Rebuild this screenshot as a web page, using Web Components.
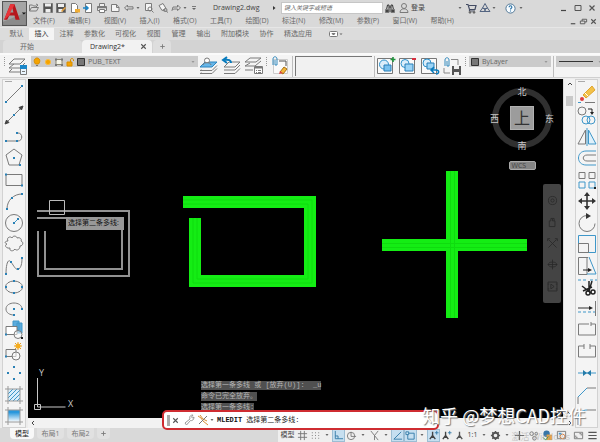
<!DOCTYPE html>
<html lang="zh-CN">
<head>
<meta charset="utf-8">
<title>Drawing2.dwg</title>
<style>
  html, body { height: 100%; margin: 0; }
  body { font: 7px/10px "Open Sans", "Noto Sans CJK SC", sans-serif; color: #686868; background: #d9d9d9; overflow: hidden; }
</style>
</head>
<body>
<cad-app></cad-app>

<script>
/* Icon drawings: [view box size, markup, grip points] */
const ICONS = {
  logo: [24, '<rect width="24" height="24" fill="#555" stroke="none"/><rect x="1" y="1" width="22" height="22" fill="#8b8b8b" stroke="none"/><path d="M1 1h22v10L1 20z" fill="#a5a5a5" stroke="none"/><path d="M2 18 8 3h4l5 15h-4l-1-4H7l-2 4z" fill="#b5161d" stroke="none"/><path d="M8 3h4l-2 5-3 6-5 4z" fill="#e8343a" stroke="none"/><path d="m8 11 2-4 1 4z" fill="#999" stroke="none"/><path d="M19 11h4l-2 2z" fill="#111" stroke="none"/>'],
  open: [12, '<path d="M1.500 9V3h3l1 1h3v1.500M1.500 9l2-3.500h7L8.500 9zM8 2l2 1-1 1" />'],
  save: [12, '<path d="M1.500 1.500h9v9h-9z" fill="#555"/><path d="M3 1.500h6v3H3zM3.500 7h5v3.500h-5z" fill="#eee" stroke="none"/>'],
  saveas: [12, '<path d="M1.500 1.500h9v9h-9z" fill="#555"/><path d="M3 2h6v3H3zM3.500 7h4v3h-4z" fill="#eee" stroke="none"/><path d="m6 9 4-4 1 1-4 4z" fill="#e9a13b" stroke="none"/>'],
  phoneopen: [12, '<path d="M2.500 1.500h4l2 2v7h-6z" fill="#fff"/><path d="M6 7h5v3.500H6z" fill="#f0ad33" stroke="none"/>'],
  phonesave: [12, '<path d="M3.500 1.500h6v9h-6z" fill="#fff"/><path d="M1 6h5M4 4l2 2-2 2" stroke="#1c86c8" stroke-width="1.500"/>'],
  print: [12, '<path d="M3.500 4V1.500h5V4M1.500 4.500h9v4h-9z" fill="#eee"/><path d="M1.500 5.500h9" stroke-width="1.600"/><path d="M3.500 7.500h5v3h-5z" fill="#fff"/>'],
  plot: [12, '<path d="M2.500 2.500h5l2.500 3v4H2.500z" fill="#f4f4f4"/><path d="M7.500 2.500v3H10"/>'],
  undo: [12, '<path d="M4.500 3 1.500 6l3 2.500V7h5.500V4.800H4.500z"/>'],
  redo: [12, '<path d="m7.500 3 3 3-3 2.500V7h-4L2 8.500 3 5h4.500z"/>'],
  page: [12, '<path d="M2.500 1.500h6v7h-6z" fill="#f4f4f4"/><circle cx="7" cy="7" r="2"/><path d="m8.500 8.500 2 2"/>'],
  page2: [12, '<path d="m2 3.500 4-2 3 5-4 2z" fill="#f4f4f4"/><path d="M6 8.500c2 1 3 0 5 2" /><circle cx="8.500" cy="8" r="1.500"/>'],
  caret: [6, '<path d="M1.500 2h3L3 4z" fill="#666" stroke="none"/>'],
  caretbar: [8, '<path d="M2 2.500h4"/><path d="M2 4h4L4 6z" fill="#666" stroke="none"/>'],
  right: [6, '<path d="M2 1v4l2.500-2z" fill="#333" stroke="none"/>'],
  binoc: [12, '<path d="M2 10 3.500 3h1.500v7zM10 10 8.500 3H7v7zM5 5h2" stroke="#333"/><path d="M1.500 7.500H5v3H1.500zM7 7.500h3.500v3H7z" fill="#444"/>'],
  user: [12, '<circle cx="6" cy="4" r="2.500"/><path d="M2 10.500c0-5 8-5 8 0z"/>'],
  cart: [12, '<path d="M1 2.500h2l1.500 5H10l1-4H4M4.500 7.500V9H10" stroke="#444c63" stroke-width="1.200"/><circle cx="5" cy="10.300" r="1" fill="#444"/><circle cx="9" cy="10.300" r="1" fill="#444"/>'],
  a360: [12, '<path d="M6 1.500 8.500 6 6 7 3.500 6zM3.500 6 1 9.500h5V7zM8.500 6 11 9.500H6V7z" stroke="#536481"/>'],
  help: [12, '<circle cx="6" cy="6" r="5" fill="#f8fcff" stroke="#456f91"/><path d="M4.500 4.500c0-2 3-2 3 0C7.500 6 6 5.500 6 7.200M6 8.200v1" stroke="#246fa5" stroke-width="1.200"/>'],
  min: [10, '<path d="M2 7.500h5" stroke="#444" stroke-width="1.200"/>'],
  max: [10, '<path d="M2 2.500h6v5H2z" stroke="#555"/>'],
  restore: [10, '<path d="M1.500 4.500h5v3h-5zM3.500 4.500v-2h5v3h-2" stroke="#555"/>'],
  close: [10, '<path d="m2.500 2.500 5 5m0-5-5 5" stroke="#555" stroke-width="1.200"/>'],
  plus: [10, '<path d="M5 2.500v5M2.500 5h5"/>'],
  panel: [16, '<rect x="2.500" y="5.500" width="8" height="5" rx="1" fill="#fff"/><path d="M5 7.500h3L6.500 9z" fill="#333"/><path d="M12.500 7.500h3L14 9z" fill="#666" stroke="none"/>'],
  layers: [20, '<path d="M1 8 6 3h11l-5 5zM1 12l5-4M1 12h11l5-5M1 16l3-3M1 16h11l5-5" /><path d="M12.500 9.500h6v9h-6z" fill="#eaf6ff"/><path d="M12 9h7v4h-7z" fill="#1b87c9" stroke="none"/><path d="M14 15.500h3"/>'],
  layblue: [20, '<path d="m1 11 5-5h12l-5 5z" fill="#66b6e9" stroke="#2c84bd"/><path d="m3 14-2 .500h12l5-5M3 17l-2 .500h12l5-5"/><circle cx="8" cy="4.500" r="2.500" fill="#fff"/><path d="M4 9c0-3 8-3 8 0"  fill="#66b6e9"/>'],
  layprev: [20, '<path d="m2 11 5-5h11l-5 5zM2 14h11l5-5M2 17.500h11l5-5"/><path d="M9 7c0-3-2-3.500-7-3M5 1 1 4l4 3" fill="none" stroke="#087bbd" stroke-width="2"/>'],
  layiso: [20, '<path d="m1 6 5-4h11l-5 4zM1 10l5-3M1 10h10l6-5M1 14h8"/><path d="M10.500 10.500h8v7h-8z" fill="#fff"/><path d="M11 11.500h7" stroke-width="2"/><path d="M12 14.500h1m1 0h3m-5 2h1m1 0h3"/>'],
  bulb: [10, '<path d="M3.500 7C1 4 2.500 1 5 1s4 3 1.500 6z" fill="#f5a400" stroke="#d98e00"/><path d="M4 8.500h2" stroke="#777"/>'],
  sun: [10, '<circle cx="5" cy="5" r="2.600" fill="#f5a400" stroke="#f8bd43"/>'],
  vp: [10, '<path d="M2 2.500h6v5H2z" fill="#f4f4e8" stroke="#8a8672"/><path d="M1 1.500h2v2H1zM7 1.500h2v2H7zM1 7h2v2H1zM7 7h2v2H7z" fill="#777" stroke="none"/>'],
  lock: [10, '<path d="M5.500 5V3c0-2 3-2 3 0v1" stroke="#d98e00"/><path d="M2 5h5v4H2z" fill="#f5a400" stroke="#d98e00"/>'],
  swatch: [10, '<path d="M1.500 1.500h7v7h-7z" fill="#777" stroke="#333"/>'],
  match: [20, '<path d="M3.500 3.500h14v14h-14z" stroke="#ccc" fill="#fafafa"/><path d="M3 9V3c0-3 4-3 4 0v6H5V4" stroke="#348abd"/><path d="M9 5h7v5" stroke="#555"/><path d="m10 16 4-5 3 2-4 5z" fill="#f3b83b" stroke="#a87117"/><path d="m9 18 1-3 3 2z" fill="#db4545" stroke="none"/>'],
  gadd: [20, '<path d="M1.500 2.500h15v15h-15z" fill="#fafafa" stroke="#777"/><circle cx="8" cy="8.500" r="4.500" fill="#dceefa" stroke="#2e92cc"/><path d="M8 9h7v6H8z" fill="#78c1ee" stroke="#287fb8"/><path d="M17 1v5m-2.500-2.500h5" stroke="#20923c" stroke-width="1.600"/>'],
  gsub: [20, '<path d="M1.500 2.500h15v15h-15z" fill="#fafafa" stroke="#777"/><circle cx="7" cy="7.500" r="4" fill="#dceefa" stroke="#2e92cc"/><path d="M7 8h8v7H7z" fill="#9bd4f6" stroke="#287fb8"/><path d="M14 3h4" stroke="#d52f3f" stroke-width="2"/>'],
  gundo: [20, '<path d="M1.500 2.500h15v15h-15z" fill="#fafafa" stroke="#777"/><circle cx="7" cy="7" r="4" fill="#dceefa" stroke="#2e92cc"/><path d="M7 7h7v6H7z" fill="#9bd4f6" stroke="#287fb8"/><path d="M12 14h4c4 0 3 4 0 4M14 11l-3 3 3 3" stroke="#087bbd" stroke-width="1.500"/>'],
  gsave: [20, '<path d="M3 10V4c0-3 4-3 4 0v6H5V5" stroke="#348abd"/><path d="M9 3.500h7V9M2 12v5h6" stroke="#888"/><path d="M10 10h9v9h-9z" fill="#555" stroke="none"/><path d="M12 10h5v3h-5zM12 16h5v3h-5z" fill="#eee" stroke="none"/>'],
  line: [20, '<path d="M2 18 18 2"/>', [[2,18],[18,2]]],
  xline: [20, '<path d="M2 18 18 2"/><path d="m1 19 1.500-4L5 17.500zM19 1l-4 1.500L17.500 5z" fill="#444" stroke="#444"/>', [[10,10]]],
  pline: [20, '<path d="M2 14h12c5 0 5-8 0-8"/>', [[2,14],[13,14],[13,6]]],
  polygon: [20, '<path d="m10 1 8 6-3 10H5L2 7z"/>', [[10,10],[16,17]]],
  rect: [20, '<path d="M2 4.500h16v11H2z"/>', [[2,4.5],[18,15.5]]],
  arc: [20, '<path d="M3 18C3 9 10 3 18 3"/>', [[3,18],[8,7],[18,3]]],
  circle: [20, '<circle cx="10" cy="10" r="8.500"/><path d="m10 10 4-4" stroke="#3f97c9"/>', [[10,10],[14,6]]],
  cloud: [20, '<path d="M4 7C2 3 7 2 8 4c1-3 5-2 5 0 3-1 5 1 4 3 3 1 2 5-1 5 0 4-4 5-5 3-2 3-6 2-5-1-4 1-6-3-3-4-3-1-2-3 1-3z"/>'],
  spline: [20, '<path d="M2 18C2 8 4 2 7 6s5 9 8 7c2-2 3-5 3-11"/>', [[2,18],[7,6],[14,13],[18,2]]],
  ellipse: [20, '<ellipse cx="10" cy="10" rx="8.500" ry="6"/>', [[10,4],[10,16],[18,10],[2,10]]],
  earc: [20, '<path d="M18 10C18 2 2 2 2 10c0 4 4 6 8 6"/>', [[18,10],[10,10],[10,16]]],
  insblock: [20, '<path d="M9 1h6v9H9zM13 3h5v10h-5z" fill="#5babdd" stroke="#3f97c9"/><path d="M2 6.500h11v8H2z" fill="#fff"/><circle cx="14" cy="14.500" r="4" fill="#fff8"/><path d="M17 17h2v2h-2z" fill="#222" stroke="none"/>', [[2,14.5]]],
  mkblock: [20, '<path d="M2 7.500h10v7H2z"/><circle cx="12" cy="14" r="4" fill="#fff8"/><path d="M14 0v8m-4-4h8m-7-3 6 6m0-6-6 6" stroke="#e79d20"/><circle cx="14" cy="4" r="2.500" fill="#f6ad1d" stroke="none"/>', [[2,14.5]]],
  points: [20, '', [[10,4],[4,10],[16,10],[10,16]]],
  hatch: [20, '<path d="M4 4h12v12H4z" fill="#d9eefb" stroke="none"/><path d="m4 9 5-5M4 13l9-9M5 16 16 5M9 16l7-7m-3 7 3-3" stroke="#3f97c9"/><path d="M1 4h18M1 16h18M4 1v18M16 1v18" stroke="#999"/>'],
  gradient: [20, '<defs><linearGradient id="g" x2="0" y2="1"><stop offset=".2" stop-color="#2797dc"/><stop offset="1" stop-color="#fff"/></linearGradient></defs><path d="M4 4h12v12H4z" fill="url(#g)" stroke="none"/><path d="M1 4h18M1 16h18M4 1v18M16 1v18" stroke="#999"/>'],
  erase: [20, '<path d="m6 11 9-9 3 4-9 8z" fill="#f3c148" stroke="#dfa52f"/><path d="m8 9 3 3" stroke="#fff"/><circle cx="5" cy="15" r="2" fill="#dd3f3f" stroke="none"/><path d="M1 18.500h3" stroke="#3f97c9"/><path d="M8 18.500h10"/>'],
  copy: [20, '<circle cx="5" cy="6" r="4"/><circle cx="9" cy="15" r="4" stroke="#3f97c9"/><circle cx="14" cy="15" r="4" stroke="#3f97c9"/><path d="M11 4h4v4" stroke="#222"/><path d="M13 7h4l-2 3z" fill="#222" stroke="none"/>'],
  mirror: [20, '<path d="M8.500 3v14H1z"/><path d="M11.500 3v14H19z" fill="#dff0fa" stroke="#3f97c9"/><path d="M10 1v18" stroke="#3f97c9"/>'],
  offset: [20, '<path d="M19 3H9C-1 3-1 17 9 17h10" stroke="#3f97c9"/><path d="M19 7H10c-5 0-5 6 0 6h9"/>'],
  array: [20, '<path d="M2 2.500h6v6H2zM12 2.500h6v6h-6z"/><path d="M2 12h6v6H2zM12 12h6v6h-6z" stroke="#3f97c9"/><path d="M17 17h2v2h-2z" fill="#222" stroke="none"/>'],
  move: [20, '<path d="M10 3v14M3 10h14" stroke="#333" stroke-width="1.600"/><path d="M10 1 7 5h6zM10 19l-3-4h6zM1 10l4-3v6zM19 10l-4-3v6z" fill="#333" stroke="none"/>'],
  rotate: [20, '<path d="M10 2.500a8 8 0 1 0 8 8"/><path d="m9 0 5 3-5 3z" fill="#333" stroke="none"/>'],
  scale: [20, '<path d="M1.500 1.500h17v17h-17z" stroke="#3f97c9"/><path d="M1.500 9.500h10v9h-10z"/>'],
  stretch: [20, '<path d="M11 1.500H1.500v17H10V1"/><path d="m12 1 7 17h-9" stroke="#3f97c9"/><path d="M6 14h6" stroke="#222"/><path d="m11 12 4 2-4 2z" fill="#222" stroke="none"/>'],
  trim: [20, '<path d="M1 3h3m2 0h3m4 0h3m2 0h2" stroke="#3f97c9"/><path d="m5 9 9 7M6 14l9-4M12 4v9M15 4l-3 10" stroke="#222" stroke-width="1.500"/><circle cx="11" cy="16" r="2" stroke="#222" stroke-width="1.500"/><circle cx="16" cy="15" r="2" stroke="#222" stroke-width="1.500"/>'],
  extend: [20, '<path d="M18.500 2v15"/><path d="M1 13h3m2 0h3m2 0h3m2 0h2" stroke="#3f97c9"/><path d="M1 9h11" stroke="#333"/><path d="m12 7 4 2-4 2z" fill="#222" stroke="none"/>'],
  breakpt: [20, '<path d="M14 4h4.500v11h-17V4H12M14 2v4"/>'],
  brk: [20, '<path d="M7 4H1.500v11h17V4H13M7 2v5M13 2v5"/>'],
  join: [20, '<path d="M1 10h18" stroke="#3f97c9"/><path d="m6 7 4 3-4 3zM14 7l-4 3 4 3z" fill="#247ba9" stroke="none"/>'],
  chamfer: [20, '<path d="m1 12 9-9" stroke="#3f97c9"/><path d="M10 3h9M1 12v7"/>'],
  fillet: [20, '<path d="M1 13C1 7 5 4 10 4" stroke="#3f97c9"/><path d="M10 4h9M1 13v6"/>'],
  wrench: [12, '<path d="m2 9 5-4c-1-3 1-4 3-4L8.500 3l1 1L11 3c0 3-2 4-3.500 3.500L3.500 11z" stroke="#999"/>'],
  mledit: [12, '<path d="m1 2 3 2 2 3 5 4M3 1l3 4 4 2" stroke="#d69034"/><path d="m2 10 8-8" stroke="#777"/>'],
  grid: [12, '<path d="M4 1v10M8 1v10M1 4h10M1 8h10" stroke="#777"/>'],
  snap: [12, '<path d="M2 3h1m2.500 0h1M9 3h1M2 6h1m2.500 0h1M9 6h1M2 9h1m2.500 0h1M9 9h1" stroke="#777"/>'],
  ortho: [12, '<path d="M2.500 1v8.500H11M2.500 6.500h3v3" stroke="#357ca8"/>'],
  polar: [12, '<circle cx="5.500" cy="6.500" r="4"/><path d="M5.500 2v5H11"/>'],
  iso: [12, '<path d="m2 1 8 10M6 6l4-5M6 6v5"/>'],
  otrack: [12, '<path d="M10 2 2 10h9" stroke="#357ca8"/>'],
  osnap: [12, '<path d="M3 3.500h7V10H3z" stroke="#357ca8"/><path d="M1 2h3v3H1z" fill="#cde5f4" stroke="#357ca8"/>'],
  ann: [12, '<path d="M6 2v4m0 0-3 4M6 6l3 4M4 8h4" stroke="#555" stroke-width="1.500"/>'],
  annstar: [12, '<path d="M5 2v4m0 0-3 4M5 6l3 4M3 8h4" stroke="#444" stroke-width="1.500"/><path d="M9.500 1v4m-2-2h4" stroke="#357ca8"/>'],
  gear: [12, '<circle cx="6" cy="6" r="3" stroke="#555" stroke-width="2"/><path d="M6 1v2m0 6v2M1 6h2m6 0h2M2.500 2.500l1 1m5 5 1 1m0-7-1 1m-5 5-1 1" stroke="#555" stroke-width="1.500"/>'],
  cross: [12, '<path d="M6 1v10M1 6h10" stroke="#666" stroke-width="1.300"/>'],
  iso2: [12, '<circle cx="4" cy="4" r="2"/><circle cx="9" cy="4" r="1.500"/><circle cx="7" cy="9" r="2"/>'],
  hw: [12, '<circle cx="5" cy="4" r="3.500" fill="#3876a7" stroke="none"/><path d="M5 5h6v6H5z" fill="#e8a444" stroke="none"/><path d="m1 8 3 3 3-4" stroke="#389146"/>'],
  clean: [12, '<path d="M1.500 1.500h9v8h-9z"/><circle cx="7" cy="7" r="2.500" stroke="#d67a35" fill="#fff"/><path d="M3 3h3v2H3z" fill="#4c99cf" stroke="none"/>'],
  full: [12, '<path d="M1.500 2.500h9v7h-9zM3 6v2h2M9 6V4H7"/>'],
  burger: [12, '<path d="M1.500 2.500h9m-9 3.500h9m-9 3.500h9" stroke="#555" stroke-width="1.300"/>'],
  wheel: [16, '<circle cx="8" cy="8" r="5"/><circle cx="8" cy="8" r="2"/>'],
  pan: [16, '<path d="M4 13V6h2V3h2v3h3v7zM8 3h2v3"/>'],
  zoomx: [16, '<path d="m3 3 10 10M13 3 3 13M2 5V2h3M11 2h3v3"/>'],
  orbit: [16, '<path d="M8 2v12M2 8h12"/><ellipse cx="8" cy="8" rx="5" ry="3"/>'],
  motion: [16, '<path d="M2.500 2.500h11v11h-11zM6 5v6l4-3zM2 5h2m8 0h2M2 11h2m8 0h2"/>']
};

const define = (name, css, markup) => {
  const tpl = document.createElement('template');
  customElements.define(name, class extends HTMLElement {
    constructor() { super(); this.attachShadow({ mode: 'open' }); }
    connectedCallback() {
      if (this.shadowRoot.childNodes.length) return;
      tpl.innerHTML = `<style>*{box-sizing:border-box}button{font:inherit;color:inherit;background:none;border:0;margin:0;padding:0;display:flex;align-items:center;justify-content:center;white-space:nowrap}${css}</style>` +
        (typeof markup === 'function' ? markup(this) : markup);
      this.shadowRoot.append(tpl.content.cloneNode(true));
    }
  });
};
const list = (el, attr) => el.getAttribute(attr).split(' ');

define('cad-icon', ':host{display:block;width:12px;height:12px;flex:none}svg{display:block;width:100%;height:100%;fill:none;stroke:#7a7a7a;stroke-width:1;overflow:visible}', el => {
  const [size, art, dots = []] = ICONS[el.getAttribute('name')];
  return `<svg viewBox="0 0 ${size} ${size}" aria-hidden="true">${art}${dots.map(([x, y]) => `<rect x="${x - 1}" y="${y - 1}" width="2" height="2" fill="#2980b5" stroke="none"/>`).join('')}</svg>`;
});

const iconButton = (n, cls = '') => `<button class="${cls}" aria-label="${n}"><cad-icon name="${n}"></cad-icon></button>`;

define('icon-row', `
  :host{display:flex;align-items:center;justify-content:space-between;flex:none}
  cad-icon{width:var(--icon,12px);height:var(--icon,12px)}`,
  el => list(el, 'icons').map(n => iconButton(n)).join(''));

define('title-bar', `
  :host{display:flex;align-items:center;height:15px;padding-top:1px;color:#444}
  .a{width:107px}.b{width:39px;margin:0 0 0 2px}
  .caret{width:6px;height:6px}.bar{width:8px;height:8px;margin-left:2px}
  h1{font:inherit;margin:0 0 0 15px;width:58px;color:#444}
  input{width:102px;height:12px;border:1px solid #c6c6c6;background:#fff;padding:0 2px;margin:0 1px 0 4px;font:italic 6px/10px "Open Sans","Noto Sans CJK SC",sans-serif;color:#666}
  input::placeholder{color:#666}
  .find{width:26px}.login{margin:0 32px 0 1px}.apps{width:26px;margin-left:2px}
  .help{margin-left:8px}.help cad-icon{width:11px;height:11px}.help+cad-icon{margin-left:2px}
  .win{margin-left:auto;width:38px;margin-right:3px;--icon:10px}`,
  `<icon-row class="a" icons="open save saveas phoneopen phonesave print plot undo"></icon-row><cad-icon class="caret" name="caret"></cad-icon>
   <icon-row class="b" icons="page page2 redo"></icon-row><cad-icon class="caret" name="caret"></cad-icon><cad-icon class="bar" name="caretbar"></cad-icon>
   <h1>Drawing2.dwg</h1><cad-icon class="caret" name="right"></cad-icon>
   <input type="search" aria-label="搜索" placeholder="键入关键字或短语">
   <icon-row class="find" icons="binoc user"></icon-row><button class="login">登录</button><cad-icon class="caret" name="caret"></cad-icon>
   <icon-row class="apps" icons="cart a360"></icon-row><cad-icon class="caret" name="caret"></cad-icon>
   ${iconButton('help', 'help')}<cad-icon class="caret" name="caret"></cad-icon>
   <icon-row class="win" icons="min max close"></icon-row>`);

define('menu-bar', `
  :host{display:flex;align-items:center;height:12px}
  nav{display:flex;justify-content:space-between;width:426px;padding-left:5px}icon-row{margin-left:auto;width:29px;margin-right:2px;--icon:9px}`,
  `<nav>${['文件(F)', '编辑(E)', '视图(V)', '插入(I)', '格式(O)', '工具(T)', '绘图(D)', '标注(N)', '修改(M)', '参数(P)', '窗口(W)', '帮助(H)'].map(t => `<button>${t}</button>`).join('')}</nav><icon-row icons="min restore close"></icon-row>`);

define('ribbon-tabs', `
  :host{display:flex;height:13px;padding-left:4px;background:#dcdcdc;border-top:1px solid #e6e6e6}
  .w2{width:25px}.w3{width:31px}.w4{width:38px}
  .on{background:#f4f4f4;color:#333}
  cad-icon{width:16px;height:16px;margin:-2px 0 0 10px}`,
  ['默认', '插入', '注释', '参数化', '可视化', '视图', '管理', '输出', '附加模块', '协作', '精选应用'].map((t, i) =>
    `<button class="w${t.length}${i === 1 ? ' on' : ''}">${t}</button>`).join('') + '<cad-icon name="panel"></cad-icon>');

define('file-tabs', `
  :host{display:flex;align-items:stretch;height:13px;background:#d3d3d3;padding-left:3px}
  button{border-radius:4px 4px 0 0}
  .start{width:79px;background:#dedede;justify-content:flex-start;padding-left:17px}
  .doc{width:70px;background:#f2f2f2;color:#333;justify-content:space-between;padding:0 4px 0 8px}
  .new{width:18px;background:#dedede;margin-left:1px}cad-icon{width:9px;height:9px}`,
  `<button class="start">开始</button><button class="doc">Drawing2*<cad-icon name="close"></cad-icon></button><button class="new" aria-label="新建"><cad-icon name="plus"></cad-icon></button>`);

define('drop-box', `
  :host{display:flex;align-items:center;height:11px;background:#cbcbcb;color:#666;min-width:0}
  .icons{display:flex;gap:1px;padding-left:1px}.icons cad-icon{width:10px;height:10px}
  select{flex:1;min-width:0;appearance:none;font:inherit;color:inherit;background:none;border:0;padding:0 2px;margin:0}
  .arrow{width:6px;height:6px;margin-right:2px;opacity:.5}`,
  el => `<span class="icons">${el.hasAttribute('icons') ? list(el, 'icons').map(n => `<cad-icon name="${n}"></cad-icon>`).join('') : '<slot></slot>'}</span>
    <select aria-label="${el.getAttribute('label')}"><option>${el.getAttribute('value')}</option></select><cad-icon class="arrow" name="caret"></cad-icon>`);

define('tool-strip', `
  :host{display:flex;height:25px;background:#f4f4f4;border-top:2px solid #fafafa;border-bottom:1px solid #d0d0d0;padding-top:1px;--icon:20px}
  .grip{width:2px;height:9px;border-left:1px dotted #999;margin:1px 2px 0 0}
  icon-row{height:20px}
  .one{width:23px}
  .three{width:65px;margin:0 2px 0 1px}.match{width:22px}.four{width:86px;margin-right:3px}
  .layer{width:167px}.color{width:82px}.type{flex:1;overflow:hidden;white-space:nowrap}
  .field{width:77px;height:20px;border-top:1px solid #777;border-left:1px solid #777;background:#f1f1f1;margin:0 2px 0 1px}
  .rule{width:1px;background:#bdbdbd;margin:0 1px 0 0}.split{margin:0 2px}
  .line{width:34px;border-top:1px solid #333;margin-left:2px}`,
  `<span class="grip" style="margin-left:4px"></span><icon-row class="one" icons="layers"></icon-row>
   <drop-box class="layer" label="图层" icons="bulb sun vp lock swatch" value="PUB_TEXT"></drop-box>
   <icon-row class="three" icons="layblue layprev layiso"></icon-row><span class="grip"></span><icon-row class="match" icons="match"></icon-row>
   <span class="rule"></span><span class="field"></span><span class="rule"></span>
   <icon-row class="four" icons="gadd gsub gundo gsave"></icon-row><span class="grip"></span>
   <drop-box class="color" label="颜色" icons="swatch" value="ByLayer"></drop-box><span class="rule split"></span>
   <drop-box class="type" label="线型" value="ByLayer"><span class="line"></span></drop-box>`);

define('tool-palette', `
  :host{display:flex;flex-direction:column;background:#f4f4f4;border:1px solid #d2d2d2;width:24px;padding-top:1px}
  i{width:7px;height:2px;border-top:1px solid #aaa;margin-left:2px}
  div{flex:1;display:grid;grid-auto-rows:1fr;min-height:0}
  cad-icon{width:20px;height:20px}`,
  el => `<i></i><div>${list(el, 'tools').map(n => iconButton(n)).join('')}</div>`);

define('view-cube', `
  :host{position:absolute;top:8px;right:9px;width:64px;display:grid;justify-items:center;color:#c8c8c8;font-size:9px;line-height:10px}
  .ring{width:60px;height:60px;border:6px solid #303030;border-radius:50%;display:grid;place-items:center;margin-top:1px}
  .face{width:24px;height:24px;background:#9c9c9c;color:#333;font-size:16px;border:1px solid #b1b1b1}
  span{position:absolute}.n{top:0}.s{top:54px}.w{left:0;top:27px}.e{right:0;top:27px}
  .wcs{width:27px;height:9px;background:#858585;color:#444;font-size:7px;border:1px solid #aaa;border-radius:2px;margin-top:13px;justify-content:flex-start;padding-left:2px}`,
  `<div class="ring"><button class="face">上</button></div><span class="n">北</span><span class="s">南</span><span class="w">西</span><span class="e">东</span><button class="wcs">WCS</button>`);

define('nav-bar', `
  :host{position:absolute;top:105px;right:2px;width:18px;height:119px;background:#444;border-radius:2px;display:grid;grid-auto-rows:1fr;justify-items:center;align-items:center;padding:6px 0}
  cad-icon{width:13px;height:13px;opacity:.5;filter:brightness(.1)}`,
  ['wheel', 'pan', 'zoomx', 'orbit', 'motion'].map(n => iconButton(n)).join(''));

define('ucs-mark', ':host{position:absolute;left:4px;bottom:3px;width:50px;height:52px}svg{display:block;font:9px "Open Sans",sans-serif;fill:#c8c8c8}path{fill:none;stroke:#c8c8c8}',
  '<svg width="50" height="52"><path d="M5.500 15v29h28M2.500 41.500h6v5h-6z"/><text x="7" y="13">Y</text><text x="36" y="44">X</text></svg>');

define('drawing-area', `
  :host{position:relative;display:block;background:#000;overflow:hidden;min-width:0}
  .art{position:absolute;left:0;top:0;width:100%;height:100%;fill:none}
  .tip{position:absolute;left:38px;top:138px;width:58px;height:13px;box-sizing:border-box;background:#989898;color:#111;padding:1px 2px;white-space:nowrap}
  .log{position:absolute;left:173px;bottom:6px;margin:0;color:#b5b5b5;font:7px/9px "Liberation Mono","Noto Sans CJK SC",monospace;display:grid;gap:2px;justify-items:start;white-space:pre}
  .log span{background:#505050}`,
  `<svg class="art"><g transform="translate(-28 -79)">
    <g stroke="#929292" stroke-width="2"><path d="M37 211h92v65H38v-45"/><path d="M37 218h85v51H45v-38"/></g>
    <path d="M49.500 200.500h15v14h-15z" stroke="#bbb"/>
    <g>
      <path d="M183 202h127v79H195v-63" stroke="#14ed14" stroke-width="12"/>
      <path d="M452 171v147M382 245h145" stroke="#14ed14" stroke-width="12"/>
      <path d="M183 200h129v83H193v-65M183 204h125v75H197v-61" stroke="#0fdc0f"/>
      <path d="M450.500 171v147M454.500 171v147M382 243.500h145M382 247.500h145" stroke="#0fdc0f"/>
    </g></g></svg>
   <span class="tip">选择第二条多线:</span>
   <view-cube></view-cube><nav-bar></nav-bar><ucs-mark></ucs-mark>
   <div class="log"><span>选择第一条多线 或 [放弃(U)]:  _u</span><span>命令已完全放弃。</span><span>选择第一条多线:</span></div>`);

define('scroll-bar', `
  :host{display:flex;flex-direction:column;align-items:center;justify-content:space-between;background:#f2f2f2;border-left:1px solid #ddd}
  :host([flat]){flex-direction:row;border:0;padding:0 2px}
  svg{width:6px;height:6px;fill:none;stroke:#444;margin:2px 0}
  i{width:7px;height:10px;background:#c9c9c9;margin:7px auto auto}`,
  el => el.hasAttribute('flat')
    ? '<svg viewBox="0 0 6 6"><path d="M4 1 2 3l2 2"/></svg><svg viewBox="0 0 6 6"><path d="m2 1 2 2-2 2"/></svg>'
    : '<svg viewBox="0 0 6 6"><path d="m1 4 2-2 2 2"/></svg><i></i><svg viewBox="0 0 6 6"><path d="m1 2 2 2 2-2"/></svg>');

define('command-line', `
  :host{position:absolute;left:162px;bottom:12px;width:277px;height:20px;box-sizing:border-box;border:2px solid #cf2c31;border-radius:5px;background:#fff;display:flex;align-items:center;padding-left:3px;color:#222;font:7px/10px "Liberation Mono","Noto Sans CJK SC",monospace}
  .grip{width:3px;height:11px;background:#aaa;margin-right:1px}
  .x{width:9px;height:9px}.wr{margin:0 2px 0 3px}.caret{width:6px;height:6px;margin-right:2px}
  label{display:flex;flex:1;gap:4px}b{color:#111}input{flex:1;min-width:0;font:inherit;border:0;padding:0;outline:0;background:none}`,
  `<span class="grip"></span><cad-icon class="x" name="close"></cad-icon><cad-icon class="wr" name="wrench"></cad-icon><cad-icon name="mledit"></cad-icon><cad-icon class="caret" name="caret"></cad-icon>
   <label><b>MLEDIT</b><span>选择第二条多线:</span><input></label>`);

define('status-bar', `
  :host{display:flex;height:14px;background:#d9d9d9;align-items:stretch}
  .tabs{display:flex;flex:1;padding-left:10px}
  .tabs button{width:27px;height:11px;margin-right:3px;background:#e1e1e1;border-radius:0 0 4px 4px;color:#777}
  .tabs .on{background:#f8f8f8;color:#222;width:24px}.tabs .add{width:13px}.add cad-icon{width:9px;height:9px}
  .tools{display:flex;align-items:center;background:#efefef;width:322px;padding-left:1px;color:#444}
  .tools button{width:13px;height:13px}.tools .t{width:17px}.tools .c{width:10px}.tools .w{width:14px}
  .tools .on{background:#c6dff0;outline:1px solid #9cbdd3;outline-offset:-1px}
  .tools cad-icon{width:11px;height:11px}.tools .c cad-icon{width:6px;height:6px}.tools .gap{margin-left:3px}`,
  `<div class="tabs"><button class="on">模型</button><button>布局1</button><button>布局2</button><button class="add" aria-label="新建布局"><cad-icon name="plus"></cad-icon></button></div>
   <div class="tools"><button class="t">模型</button>${'grid snap - ortho* polar - iso - otrack* osnap* - annstar* annstar ann'.split(' ').map(n => n === '-' ? iconButton('caret', 'c') : iconButton(n.replace('*', ''), n.endsWith('*') ? 'on' : '')).join('')}<button>1:1</button>${iconButton('caret', 'c')}${iconButton('gear')}${iconButton('caret', 'c')}${['cross', 'iso2', 'hw', 'clean'].map(n => iconButton(n, 'w')).join('')}${iconButton('full', 'w gap')}${iconButton('burger', 'w')}</div>`);

define('cad-app', `
  :host{position:relative;display:flex;flex-direction:column;height:100vh;background:#d9d9d9}
  .head{display:grid;grid-template-columns:28px 1fr;height:27px}
  .logo{width:25px;height:25px;margin:1px 0 0 2px}
  .work{flex:1;min-height:0;display:grid;grid-template:1fr 10px / 26px 1fr 12px 25px;padding:1px 0 0 2px;background:#ececec}
  tool-palette{grid-row:1/3}.right{grid-area:1/4/3/5;width:23px}
  .v{grid-area:1/3}.h{grid-area:2/2/3/4}
  .mark{position:absolute;right:14px;bottom:15px;font:18px/24px "Noto Sans CJK SC",sans-serif;color:#fff;text-shadow:1px 1px 1px #777;white-space:nowrap}
  .act{position:absolute;right:30px;bottom:0;font:9px/10px "Open Sans","Noto Sans CJK SC",sans-serif;color:#9998;white-space:nowrap;pointer-events:none}`,
  `<div class="head"><cad-icon class="logo" name="logo"></cad-icon><div><title-bar></title-bar><menu-bar></menu-bar></div></div>
   <ribbon-tabs></ribbon-tabs><file-tabs></file-tabs><tool-strip></tool-strip>
   <div class="work">
     <tool-palette tools="line xline pline polygon rect arc circle cloud spline ellipse earc insblock mkblock points hatch gradient"></tool-palette>
     <drawing-area></drawing-area><scroll-bar class="v"></scroll-bar><scroll-bar class="h" flat></scroll-bar>
     <tool-palette class="right" tools="erase copy mirror offset array move rotate scale stretch trim extend breakpt brk join chamfer fillet"></tool-palette>
   </div>
   <status-bar></status-bar><command-line></command-line>
   <span class="act">激活 Windows</span><span class="mark">知乎 @梦想CAD控件</span>`);
</script>
</body>
</html>
